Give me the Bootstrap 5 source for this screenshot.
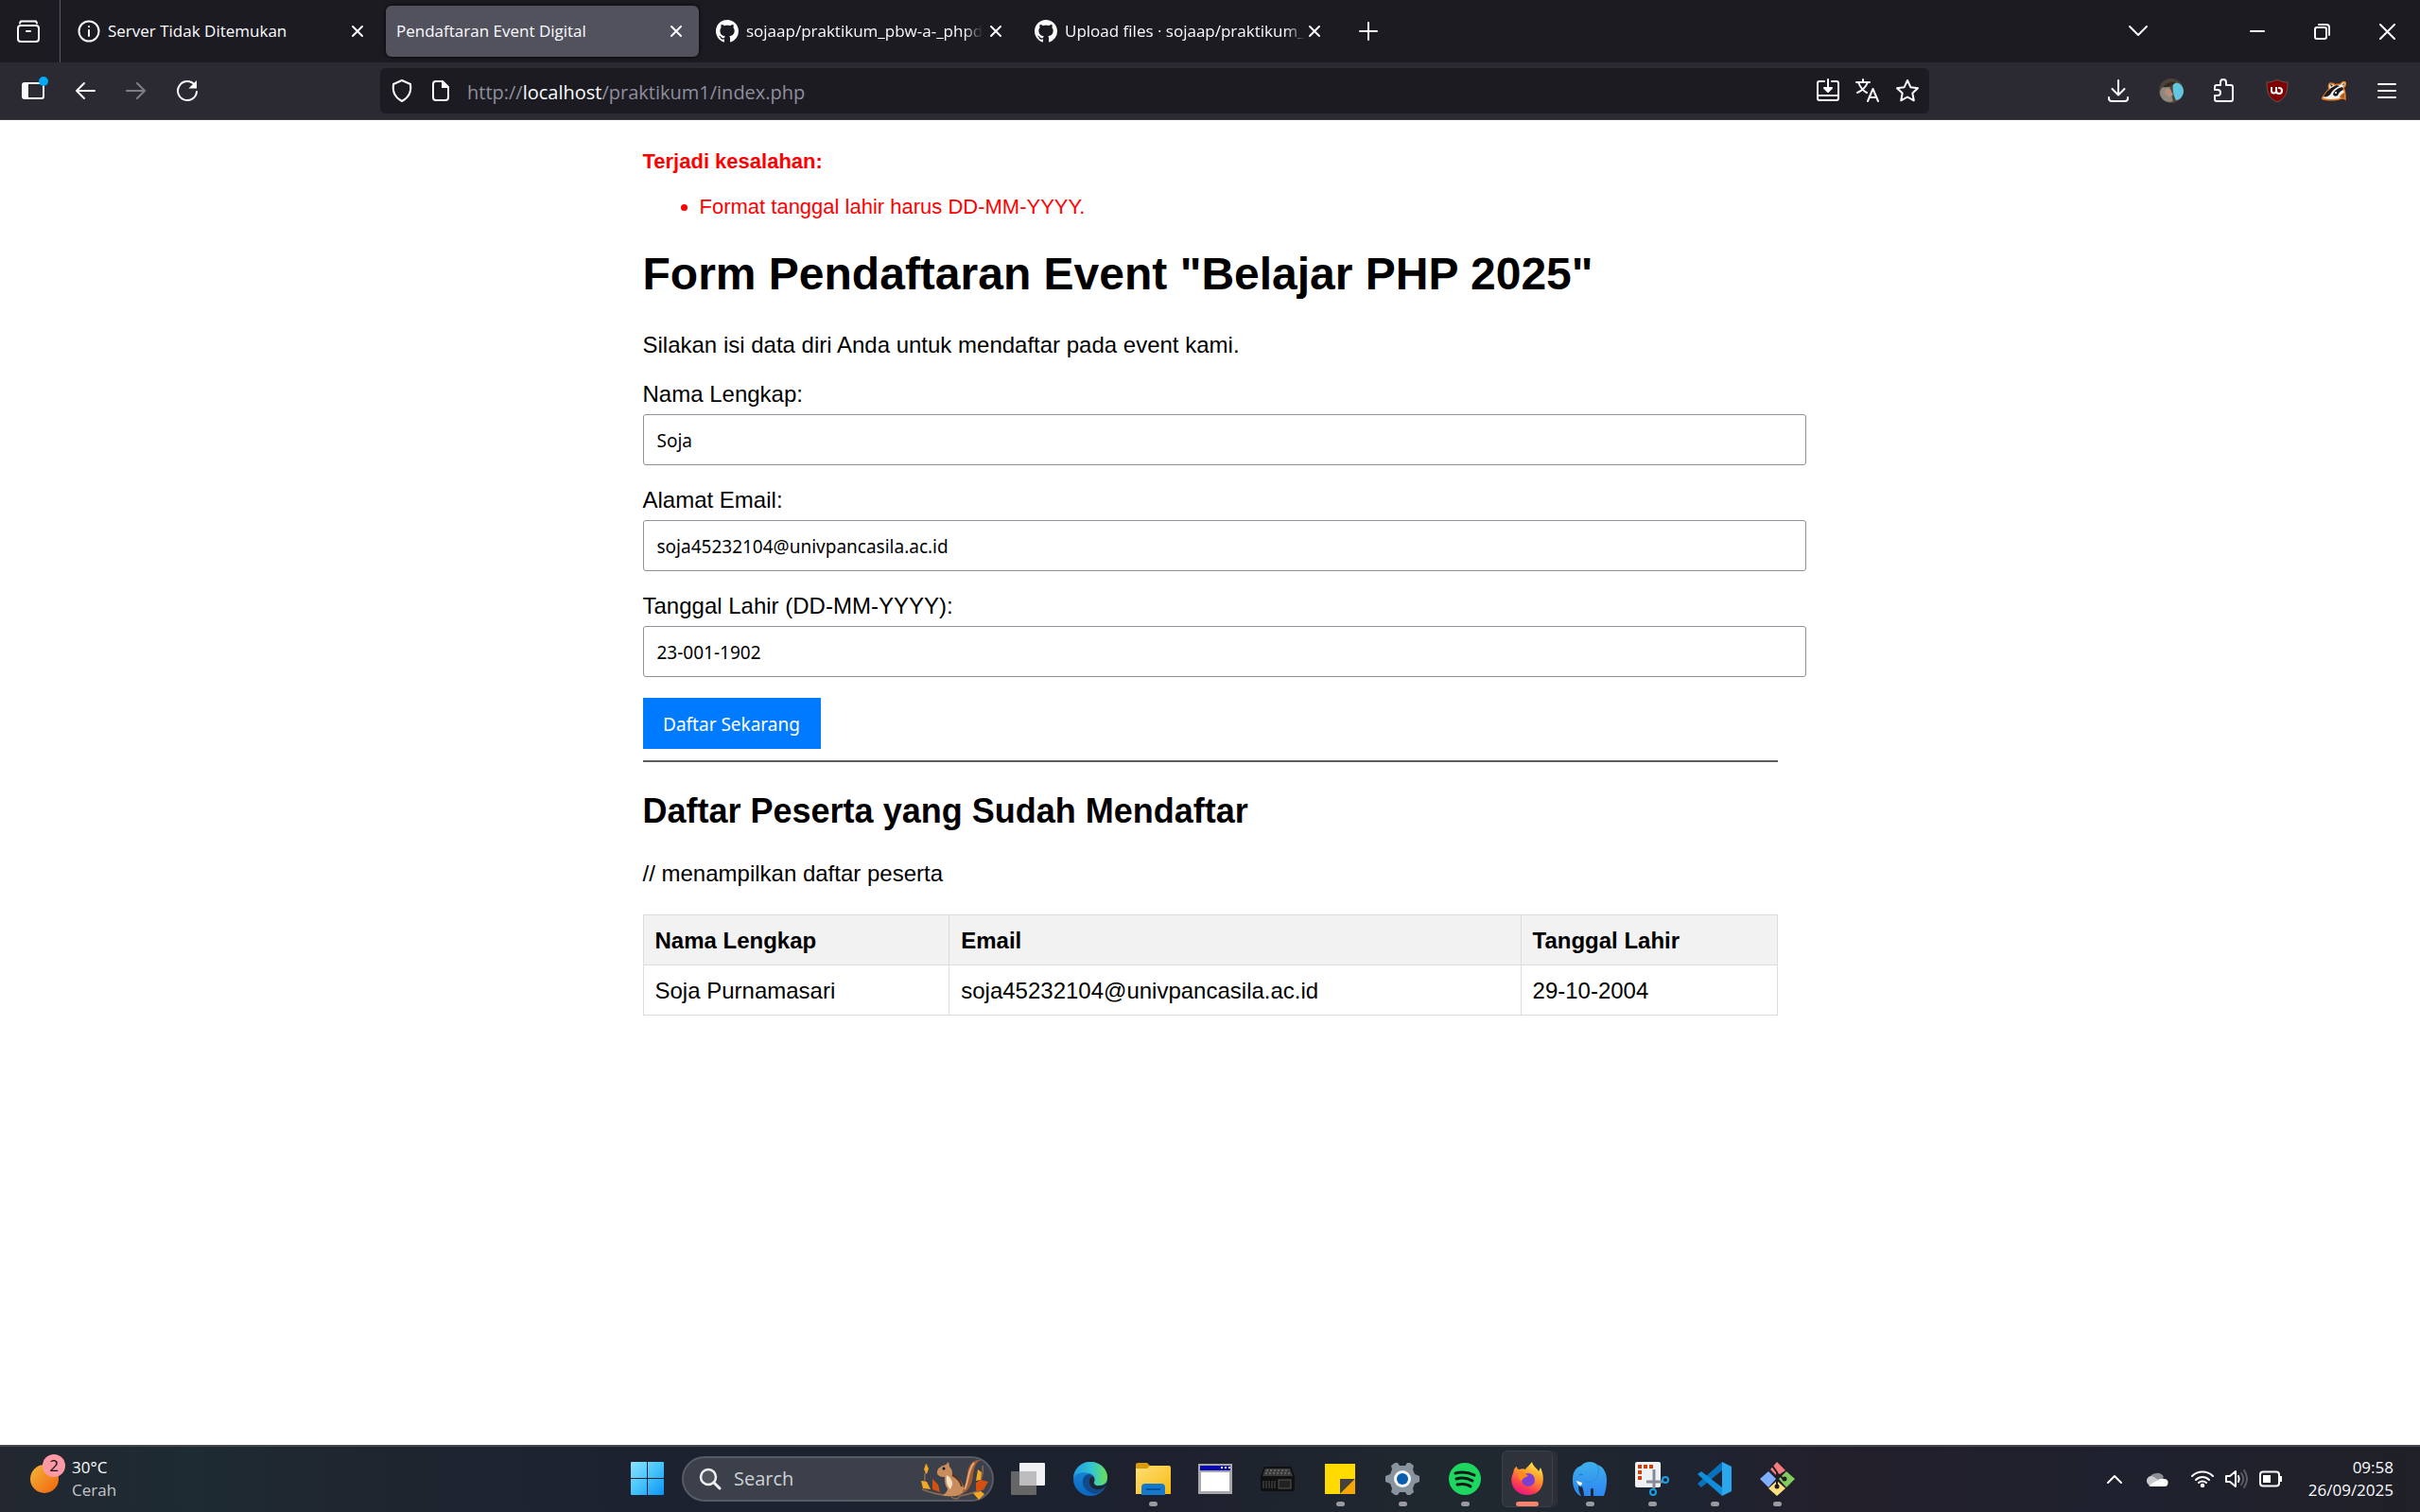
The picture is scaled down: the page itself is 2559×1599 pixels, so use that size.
<!DOCTYPE html>
<html lang="id">
<head>
<meta charset="utf-8">
<meta name="viewport" content="width=device-width, initial-scale=1">
<title>Pendaftaran Event Digital</title>
<link href="https://cdn.jsdelivr.net/npm/bootstrap@5.3.0/dist/css/bootstrap.min.css" rel="stylesheet">
<style>
body{font-family:"Liberation Sans",Arial,sans-serif;font-size:24px;line-height:28px;color:#000;background:#fff}
svg{display:block;flex:none}
.chrome-ui{font-family:"Open Sans","Noto Sans",sans-serif;color:#fbfbfe}
.chrome-ui button,.chrome-ui a{background:none;border:0;padding:0;color:inherit;text-decoration:none}
.ln{fill:none;stroke:currentColor;stroke-width:2;stroke-linecap:round;stroke-linejoin:round}
/* tab strip */
.tabstrip{height:66px;background:#1c1b22}
.recent{width:64px;margin-right:7px}
.chrome-ui .recent{border-right:1px solid #5b5b66;padding-right:4px}
.tab-item{width:331px;height:54px;margin-right:6px;padding:0 17px 0 11px;border-radius:6px;font-size:17px;line-height:24px}
.tab-item.current{background:#52525e;box-shadow:0 0 4px #000}
.tab-item.tight{padding-left:12px;padding-right:16px}
.tab-title{white-space:nowrap}
.tight .tab-title{-webkit-mask-image:linear-gradient(90deg,#000 92%,transparent);mask-image:linear-gradient(90deg,#000 92%,transparent)}
.newtab{width:56px}
.winbtn{width:69px}
/* toolbar */
.toolbar{height:61px;background:#2b2a33;border-bottom:1px solid #3b3a44}
.navside{width:402px;padding-left:9px}
.navbtn{width:54px}
.navbtn.off{opacity:.4}
.urlbox{height:48px;background:#1c1b22;border-radius:6px;padding:0 10px;gap:16px}
.urltext{font-size:20px;line-height:28px}
.chrome-ui .urltext{color:#8f8f9d;padding-top:3px}
.urltext b{font-weight:400;color:#fbfbfe}
.extras{width:519px;padding-right:7px}
.extras button{width:56px}
/* page */
.sheet{width:100%;max-width:1200px;padding-top:30px}
.err{color:#f00;font-size:22px}
.err ul{padding-left:60px;margin:20px 0 29px}
h1{font-size:48px;line-height:56px;font-weight:700;margin:0 0 33px}
h2{font-size:36px;line-height:42px;font-weight:700;margin:31px 0}
.intro{margin-bottom:23px}
.fieldrow{margin-bottom:22px}
.fieldrow label{line-height:30px;margin-bottom:6px;display:block}
.fieldrow input{display:block;width:calc(100% + 30px);height:54px;border:1px solid #8f8f9d;border-radius:3px;padding:1px 14px 0;font:19px "Noto Sans",sans-serif;color:#000;background:#fff}
.send{height:54px;width:188px;background:#007bff;color:#fff;border:0;border-radius:0;padding:1px 0 0;font:19px "Noto Sans",sans-serif;white-space:nowrap}
.rule{height:2px;border:0;background:#5c5c5c;opacity:1;margin:12px 0 0}
.people{width:100%;margin-top:29px;border-collapse:collapse}
.people th,.people td{border:1px solid #ddd;height:53px;padding:1px 12px 0;text-align:left}
.people th{background:#f2f2f2}
/* taskbar */
.taskbar{height:71px;border-top:2px solid #46474c;background:linear-gradient(90deg,#232730 0%,#1d2b33 8%,#20262f 14%,#1c2230 25%,#1d212e 48%,#20282f 60%,#1e2430 70%,#231f2b 76%,#1e212e 88%,#202027 100%);display:grid;grid-template-columns:1fr auto 1fr;font-size:17px;line-height:24px;padding-bottom:2px}
.taskbar .app{width:66px;height:67px;position:relative}
.taskbar .app.open::after{content:"";position:absolute;left:29px;bottom:4px;width:9px;height:5px;border-radius:3px;background:#9a9ba0}
.taskbar .app.live::after{left:21px;width:24px;background:#f4846c}
.livebg{width:54px;height:60px;border-radius:6px;background:#2d323b;border:1px solid #3c4149;box-shadow:5px 0 0 #2a2f38}
.searchpill{width:330px;height:48px;border:2px solid #585b65;border-radius:24px;background:#3b404a;margin:0 3px 0 4px;padding:0 4px 0 16px}
.searchpill input{background:none;border:0;outline:0;width:180px;color:#d0d1d4;font-size:20px;padding:0;margin-left:13px}
.searchpill input::placeholder{color:#d0d1d4;opacity:1}
.weather{padding-left:31px;gap:6px}
.dim{color:#c3c5c9}
.tray{padding-right:28px;gap:12px}
.tray .cloud{margin:0 12px}
.tray .clock{margin-left:16px}
</style>
<script src="https://cdn.jsdelivr.net/npm/bootstrap@5.3.0/dist/js/bootstrap.bundle.min.js"></script>
</head>
<body class="d-flex flex-column min-vh-100">
<svg width="0" height="0" class="position-absolute" aria-hidden="true">
<defs>
<symbol id="x" viewBox="0 0 14 14"><path class="ln" d="M2 2l10 10M12 2L2 12"/></symbol>
<symbol id="gh" viewBox="0 0 16 16"><path fill="#fff" d="M8 0C3.58 0 0 3.58 0 8c0 3.54 2.29 6.53 5.47 7.59.4.07.55-.17.55-.38 0-.19-.01-.82-.01-1.49-2.01.37-2.53-.49-2.69-.94-.09-.23-.48-.94-.82-1.13-.28-.15-.68-.52-.01-.53.63-.01 1.08.58 1.23.82.72 1.21 1.87.87 2.33.66.07-.52.28-.87.51-1.07-1.78-.2-3.64-.89-3.64-3.95 0-.87.31-1.59.82-2.15-.08-.2-.36-1.02.08-2.12 0 0 .67-.21 2.2.82.64-.18 1.32-.27 2-.27s1.36.09 2 .27c1.53-1.04 2.2-.82 2.2-.82.44 1.1.16 1.92.08 2.12.51.56.82 1.27.82 2.15 0 3.07-1.87 3.75-3.65 3.95.29.25.54.73.54 1.48 0 1.07-.01 1.93-.01 2.2 0 .21.15.46.55.38A8.01 8.01 0 0 0 16 8c0-4.42-3.58-8-8-8z"/></symbol>
<linearGradient id="win" x2="1" y2="1"><stop stop-color="#8fe3ff"/><stop offset=".5" stop-color="#45c3fb"/><stop offset="1" stop-color="#0a93f5"/></linearGradient>
<linearGradient id="sun" x2="1" y2="1"><stop stop-color="#f3b83a"/><stop offset="1" stop-color="#f1620c"/></linearGradient>
<linearGradient id="e1" x2="1"><stop stop-color="#1f9be0"/><stop offset=".55" stop-color="#32c6d0"/><stop offset="1" stop-color="#6be04f"/></linearGradient>
<linearGradient id="e2" y2="1" x2="0"><stop stop-color="#1b8edc"/><stop offset="1" stop-color="#0b66c0"/></linearGradient>
<linearGradient id="fo" x2="1" y2="1"><stop stop-color="#ffe07a"/><stop offset="1" stop-color="#f8b90e"/></linearGradient>
<linearGradient id="fx" x1=".8" y1="0" x2=".3" y2="1"><stop stop-color="#fff44f"/><stop offset=".4" stop-color="#ff9a2a"/><stop offset=".75" stop-color="#ff3d4f"/><stop offset="1" stop-color="#e31587"/></linearGradient>
<linearGradient id="el" x2="0" y2="1"><stop stop-color="#3fb0ea"/><stop offset="1" stop-color="#2c86f5"/></linearGradient>
</defs></svg>

<header class="chrome-ui">
 <div class="tabstrip d-flex align-items-center">
  <button class="recent h-100 d-flex align-items-center justify-content-center" aria-label="Tab terakhir"><svg width="26" height="26" viewBox="0 0 26 26" class="ln"><path d="M5 2.500h16M5 2.500l-1 2M21 2.500l1 2"/><rect x="2" y="7" width="22" height="17" rx="3"/><path d="M11 13h4"/></svg></button>
  <div class="tab-item d-flex align-items-center">
   <svg width="24" height="24" viewBox="0 0 24 24" class="ln me-2"><circle cx="12" cy="12" r="10.500"/><path d="M12 11v6M12 7v.2"/></svg>
   <span class="tab-title flex-grow-1">Server Tidak Ditemukan</span><button aria-label="Tutup"><svg width="14" height="14"><use href="#x"/></svg></button></div>
  <div class="tab-item current d-flex align-items-center"><span class="tab-title flex-grow-1">Pendaftaran Event Digital</span><button aria-label="Tutup"><svg width="14" height="14"><use href="#x"/></svg></button></div>
  <div class="tab-item tight d-flex align-items-center"><svg width="24" height="24" class="me-2"><use href="#gh"/></svg><span class="tab-title">sojaap/praktikum_pbw-a-_phpd</span><button class="ms-auto" aria-label="Tutup"><svg width="14" height="14"><use href="#x"/></svg></button></div>
  <div class="tab-item tight d-flex align-items-center"><svg width="24" height="24" class="me-2"><use href="#gh"/></svg><span class="tab-title">Upload files · sojaap/praktikum_</span><button class="ms-auto" aria-label="Tutup"><svg width="14" height="14"><use href="#x"/></svg></button></div>
  <button class="newtab d-flex justify-content-center" aria-label="Tab baru"><svg width="20" height="20" viewBox="0 0 20 20" class="ln"><path d="M10 1v18M1 10h18"/></svg></button>
  <div class="ms-auto d-flex align-items-center">
   <button class="me-5 pe-2" aria-label="Daftar tab"><svg width="22" height="14" viewBox="0 0 22 14" class="ln"><path d="M2 2l9 9 9-9"/></svg></button>
   <button class="winbtn d-flex justify-content-center ms-4" aria-label="Minimalkan"><svg width="16" height="16" viewBox="0 0 16 16" class="ln"><path d="M1 8h14"/></svg></button>
   <button class="winbtn d-flex justify-content-center" aria-label="Pulihkan"><svg width="17" height="17" viewBox="0 0 17 17" class="ln"><rect x="1" y="4" width="12" height="12" rx="2"/><path d="M5 1h8a3 3 0 0 1 3 3v8"/></svg></button>
   <button class="winbtn d-flex justify-content-center" aria-label="Tutup jendela"><svg width="17" height="17" viewBox="0 0 17 17" class="ln"><path d="M1 1l15 15M16 1L1 16"/></svg></button>
  </div>
 </div>
 <div class="toolbar d-flex align-items-center">
  <div class="navside d-flex flex-shrink-0">
   <button class="navbtn d-flex justify-content-center" aria-label="Bilah samping"><svg width="30" height="30" viewBox="0 0 30 30"><rect x="3" y="7" width="22" height="16" rx="2" class="ln"/><path d="M3 7h6v16H3z" fill="#fff"/><circle cx="25" cy="5" r="5" fill="#00a8f5"/></svg></button>
   <button class="navbtn d-flex justify-content-center align-items-center" aria-label="Kembali"><svg width="22" height="20" viewBox="0 0 22 20" class="ln"><path d="M10 2l-8 8 8 8M2 10h19"/></svg></button>
   <button class="navbtn off d-flex justify-content-center align-items-center" aria-label="Maju"><svg width="22" height="20" viewBox="0 0 22 20" class="ln"><path d="M12 2l8 8-8 8M20 10H1"/></svg></button>
   <button class="navbtn d-flex justify-content-center align-items-center" aria-label="Muat ulang"><svg width="24" height="24" viewBox="0 0 24 24"><path class="ln" d="M20 6A10 10 0 1 0 22 13"/><path d="M22 1v8.500h-8.500z" fill="#fff"/></svg></button>
  </div>
  <div class="urlbox flex-grow-1 d-flex align-items-center">
   <svg width="26" height="26" viewBox="0 0 26 26" class="ln"><path d="M13 2l9 4c1 7-1 14-9 18C5 20 3 13 4 6z"/></svg>
   <svg width="24" height="24" viewBox="0 0 24 24"><path class="ln" d="M14 2H7a3 3 0 0 0-3 3v14a3 3 0 0 0 3 3h10a3 3 0 0 0 3-3V8z"/><path d="M13 2v7h7z" fill="#fff"/></svg>
   <a href="#" class="urltext flex-grow-1">http://<b>localhost</b>/praktikum1/index.php</a>
   <svg width="26" height="26" viewBox="0 0 26 26" class="ln"><path d="M9 3H4a2 2 0 0 0-2 2v16a2 2 0 0 0 2 2h18a2 2 0 0 0 2-2V5a2 2 0 0 0-2-2h-5M2 18h22M13 1v12"/><path d="M9 10h8l-4 4z" fill="#fff"/></svg>
   <svg width="26" height="26" viewBox="0 0 26 26" class="ln"><path d="M1 4h14M8 1v3M3 4c2 5 5 9 9 11M13 4c-2 5-6 9-11 11M13 24l5.500-13L24 24M15 20h7"/></svg>
   <svg width="26" height="26" viewBox="0 0 26 26" class="ln"><path d="M13 2l3.300 7.200 7.700 1-5.700 5.300 1.500 7.800L13 19.500l-6.800 3.800 1.500-7.800L2 10.200l7.700-1z"/></svg>
  </div>
  <div class="extras d-flex justify-content-end align-items-center flex-shrink-0">
   <button class="d-flex justify-content-center" aria-label="Unduhan"><svg width="24" height="24" viewBox="0 0 24 24" class="ln"><path d="M12 1v15M5.500 10l6.500 6.500 6.500-6.500M2 19v1a3 3 0 0 0 3 3h14a3 3 0 0 0 3-3v-1"/></svg></button>
   <button class="d-flex justify-content-center" aria-label="Profil"><svg width="26" height="26" viewBox="0 0 26 26"><circle cx="13" cy="13" r="13" fill="#4d4438"/><path d="M15 5c7-2 11 4 11 9-1 7-6 9-8 9-3-5-4-12-3-18z" fill="#62c6de"/><path d="M1 16c0-6 4-9 10-7 3 4 2 10 4 15C8 27 2 22 1 16z" fill="#8d897c"/><path d="M4 9c4-5 9-6 14-5-4 4-9 6-14 5z" fill="#352620"/><path d="M7 11l5 1 3 5-4 3-5-4z" fill="#b78e7b"/></svg></button>
   <button class="d-flex justify-content-center" aria-label="Ekstensi"><svg width="26" height="26" viewBox="0 0 26 26" class="ln"><path d="M3 12V9a2 2 0 0 1 2-2h4V4a3 3 0 0 1 6 0v3h5a2 2 0 0 1 2 2v13a2 2 0 0 1-2 2H5a2 2 0 0 1-2-2v-4h3a3 3 0 0 0 0-6z"/></svg></button>
   <button class="d-flex justify-content-center" aria-label="uBlock"><svg width="26" height="26" viewBox="0 0 26 26"><path d="M13 1c3 2 7 3 11 3 0 11-2 17-11 21C4 21 2 15 2 4c4 0 8-1 11-3z" fill="#800000" stroke="#666" stroke-width=".8"/><path d="M7 9v4a2.500 2.500 0 0 0 5 0V9v4a3 3 0 1 0 3-3h-1" fill="none" stroke="#fff" stroke-width="2"/></svg></button>
   <button class="d-flex justify-content-center ms-1" aria-label="Privacy Badger"><svg width="26" height="22" viewBox="0 0 26 22"><path d="M1 18c2-3 4-6 7-9-1-3-1-5 1-6 2 0 4 0 5 2 2-1 4-1 6-1 1-2 3-3 5-2 1 2 0 4-2 6 2 3 2 7 2 12-3-2-5-1-7 0-5 1-11 1-15 0-2 0-3-1-2-2z" fill="#f2f2f2" stroke="#e67a1b" stroke-width="1.500"/><path d="M2 17c3-5 8-10 14-12l3 1c-5 2-8 5-10 9-2 2-5 3-7 2z" fill="#1a1a1a"/><path d="M12 15c1-4 5-7 10-8l1 3c-3 1-5 3-6 6-2 1-4 1-5-1z" fill="#1a1a1a"/><path d="M9 4l3 1-2 2zM22 4l2-1-1 3z" fill="#222"/><path d="M19 18c1-3 3-4 5-5v6z" fill="#b85f16"/><circle cx="15" cy="13" r="1" fill="#fff"/></svg></button>
   <button class="d-flex justify-content-center" aria-label="Menu"><svg width="22" height="18" viewBox="0 0 22 18" class="ln"><path d="M2 2h18M2 9h18M2 16h18"/></svg></button>
  </div>
 </div>
</header>

<main class="flex-grow-1">
 <div class="sheet mx-auto">
  <div class="err"><strong>Terjadi kesalahan:</strong><ul><li>Format tanggal lahir harus DD-MM-YYYY.</li></ul></div>
  <h1>Form Pendaftaran Event "Belajar PHP 2025"</h1>
  <p class="intro">Silakan isi data diri Anda untuk mendaftar pada event kami.</p>
  <form>
   <div class="fieldrow"><label for="nama">Nama Lengkap:</label><input id="nama" type="text" value="Soja"></div>
   <div class="fieldrow"><label for="email">Alamat Email:</label><input id="email" type="text" value="soja45232104@univpancasila.ac.id"></div>
   <div class="fieldrow"><label for="lahir">Tanggal Lahir (DD-MM-YYYY):</label><input id="lahir" type="text" value="23-001-1902"></div>
   <button type="button" class="send d-block">Daftar Sekarang</button>
  </form>
  <hr class="rule">
  <h2>Daftar Peserta yang Sudah Mendaftar</h2>
  <p class="m-0">// menampilkan daftar peserta</p>
  <table class="people">
   <colgroup><col style="width:27%"><col><col style="width:22.6%"></colgroup>
   <thead><tr><th>Nama Lengkap</th><th>Email</th><th>Tanggal Lahir</th></tr></thead>
   <tbody><tr><td>Soja Purnamasari</td><td>soja45232104@univpancasila.ac.id</td><td>29-10-2004</td></tr></tbody>
  </table>
 </div>
</main>

<footer class="taskbar chrome-ui">
 <div class="weather d-flex align-items-center">
  <svg width="39" height="52" viewBox="0 0 39 52"><circle cx="16" cy="26" r="15" fill="url(#sun)"/><circle cx="26" cy="12" r="12" fill="#ff99a4"/><text x="26" y="18" text-anchor="middle" font-size="17" fill="#111">2</text></svg>
  <div><div>30°C</div><div class="dim">Cerah</div></div>
 </div>
 <div class="d-flex align-items-center ps-1">
  <button class="app d-flex align-items-center justify-content-center" aria-label="Mulai"><svg width="35" height="35" viewBox="0 0 35 35"><path fill="url(#win)" d="M0 1a1 1 0 0 1 1-1h16v17H0zM18 0h16a1 1 0 0 1 1 1v16H18zM0 18h17v17H1a1 1 0 0 1-1-1zM18 18h17v16a1 1 0 0 1-1 1H18z"/></svg></button>
  <div class="searchpill d-flex align-items-center">
   <svg width="24" height="24" viewBox="0 0 24 24"><circle cx="10" cy="10" r="8" fill="#50545d" stroke="#f0f0f2" stroke-width="2.500"/><path d="M16 16l6 6" stroke="#f0f0f2" stroke-width="3" stroke-linecap="round"/></svg>
   <input type="search" placeholder="Search" aria-label="Search">
   <svg class="ms-auto" width="72" height="44" viewBox="0 0 72 44"><path d="M2 33c12 5 20 6 30 7 4 4 8 4 10 0 10-2 18-4 26-8M7 6c-1 8-3 12-2 20M66 8c1 8 0 14-6 22" fill="none" stroke="#8b6b4f" stroke-width="1.500"/><path d="M43 38c5-6 5-14 7-22 1-9 6-15 14-14-6 3-7 9-8 16-1 10-5 18-13 20z" fill="#a45b30"/><path d="M47 33c5-10 3-20 10-28" stroke="#e1a87a" stroke-width="2" fill="none"/><path d="M24 40c2-3 5-4 5-8-3-3-3-8-3-12-5 0-9-2-8-6 1-4 5-6 9-7l3-3 1 5c3 3 3 6 3 9 8 3 12 9 12 14 0 6-5 9-12 8z" fill="#c98c5c"/><path d="M28 18c-1 6 0 11 4 15l2-5c0-5-2-8-6-10z" fill="#f6dfc3"/><path d="M34 18c6 3 9 7 10 12" stroke="#5b3018" stroke-width="2" fill="none"/><circle cx="25" cy="11" r="1.500" fill="#111"/><path d="M6 6l3 5-2 6-3-5zM1 24l6 1 4 8-8-1zM61 12l4 3-1 8-5 1zM56 37l8-2 4 3-6 6z" fill="#f7a823"/><path d="M13 22l6 6 2 8-8-3zM59 26l5-3 8 2-5 8-8 2z" fill="#d84f12"/></svg>
  </div>
  <button class="app d-flex align-items-center justify-content-center" aria-label="Tampilan tugas"><svg width="36" height="34" viewBox="0 0 36 34"><rect x="9" width="27" height="24" rx="1" fill="#f1f1f3"/><rect y="9" width="27" height="25" rx="1" fill="#666"/><path d="M9 9h18v15H9z" fill="#bdbdbf"/></svg></button>
  <button class="app d-flex align-items-center justify-content-center" aria-label="Edge"><svg width="36" height="36" viewBox="0 0 36 36"><circle cx="18" cy="18" r="18" fill="url(#e2)"/><path d="M0 17C1 6 9 0 18 0c11 0 18 8 18 16 0 6-4 9-9 9-4 0-6-2-5-4 2-3 0-8-5-9C10 10 2 12 0 17z" fill="url(#e1)"/><path d="M12 15c-5 6-1 15 7 18 5 2 10 0 13-5-7 3-14 0-15-5-1-4 1-7 3-8-2-3-6-2-8 0z" fill="#114a8b"/><path d="M22 21c-1 3 2 5 6 4 4 0 7-2 8-5l-1 5-3 3c-7 3-14 0-15-5-1-4 1-7 3-8 2 1 3 4 2 6z" fill="#1d2432"/></svg></button>
  <button class="app open d-flex align-items-center justify-content-center" aria-label="File Explorer"><svg width="37" height="34" viewBox="0 0 37 34"><path d="M0 2a2 2 0 0 1 2-2h10l4 4-3 5H0z" fill="#dc9a06"/><path d="M0 6h12l3-3h20a2 2 0 0 1 2 2v28H0z" fill="url(#fo)"/><path d="M6 34V26a4 4 0 0 1 4-4h17a4 4 0 0 1 4 4v8z" fill="#1479cc"/><path d="M11 28h15" stroke="#07509c" stroke-width="2"/></svg></button>
  <button class="app d-flex align-items-center justify-content-center" aria-label="Aplikasi"><svg width="36" height="32" viewBox="0 0 36 32"><path d="M0 0h36v32H0z" fill="#a8a8ab"/><path d="M2 2h32v5H2z" fill="#0707b2"/><path d="M24 3h2v2h-2zM28 3h2v2h-2zM32 3h2v2h-2z" fill="#fff"/><path d="M3 9h30v20H3z" fill="#fff"/></svg></button>
  <button class="app d-flex align-items-center justify-content-center" aria-label="Server"><svg width="36" height="26" viewBox="0 0 36 26"><path d="M4 0h28l4 10v14a2 2 0 0 1-2 2H2a2 2 0 0 1-2-2V10z" fill="#101010"/><path d="M5 2h26l3 8H2z" fill="#3c3c3c"/><path d="M6 4h24M5 7h26" stroke="#888" stroke-dasharray="2 2"/><path d="M3 15v8M6 15v8M9 15v8M12 15v8M15 15v8" stroke="#555"/><rect x="19" y="14" width="13" height="9" fill="#222" stroke="#555"/></svg></button>
  <button class="app open d-flex align-items-center justify-content-center" aria-label="Catatan"><svg width="32" height="32" viewBox="0 0 32 32"><path d="M0 0h32v32H0z" fill="#ffda00"/><path d="M16 16h16L16 32z" fill="#44413f"/><path d="M32 16v16H16z" fill="#f6a800"/></svg></button>
  <button class="app open d-flex align-items-center justify-content-center" aria-label="Setelan"><svg width="36" height="36" viewBox="0 0 36 36"><path d="M10 1h3l2 3h6l2-3h3l4 3-1 4 2 5 5 2v6l-5 2-2 5 1 4-4 3h-3l-2-3h-6l-2 3h-3l-4-3 1-4-2-5-5-2v-6l5-2 2-5-1-4z" fill="#88939d"/><circle cx="18" cy="18" r="9" fill="#f5f7f9"/><circle cx="18" cy="18" r="6" fill="#0a5cad"/></svg></button>
  <button class="app open d-flex align-items-center justify-content-center" aria-label="Spotify"><svg width="34" height="34" viewBox="0 0 34 34"><circle cx="17" cy="17" r="17" fill="#1ed760"/><path d="M7 11c7-2 14-1 20 2M8 17c6-2 12-1 17 2M9 23c5-1 10-1 14 2" fill="none" stroke="#101b18" stroke-width="3" stroke-linecap="round"/></svg></button>
  <button class="app open live d-flex align-items-center justify-content-center" aria-label="Firefox"><span class="livebg d-flex align-items-center justify-content-center"><svg width="35" height="35" viewBox="0 0 35 35"><path d="M3 8c1-2 2-3 3-3 0 2 1 3 3 3 2-1 4-1 6 0 1-2 5-5 7-8 1 5 5 6 7 10l2-4c6 12 3 29-13 29C3 35-3 22 2 12z" fill="url(#fx)"/><circle cx="18" cy="19" r="7" fill="#7d3fd3"/><path d="M9 11c4 0 7 2 9 4-2 1-5 1-7 5-3-3-5-6-2-9z" fill="#ff8a1c"/></svg></span></button>
  <button class="app open d-flex align-items-center justify-content-center" aria-label="Gajah"><svg width="36" height="36" viewBox="0 0 36 36"><path d="M9 4C13-1 22-1 26 3c7 2 10 9 10 16 0 6-1 11-3 17H22v-6c0-3-3-3-3 0v6h-7c0-4-1-7-2-10-2 1-3 0-4-1 0 4 1 8 3 11H8C2 32 0 26 0 18 0 11 3 6 9 4z" fill="url(#el)"/><path d="M4 20l6 2c0 2-1 3-2 3-2-1-3-2-4-5z" fill="#fff"/><path d="M26 3c3 6 1 14-4 17-4 2-7 2-10 0" fill="none" stroke="#2b8fdc"/><path d="M7 14c2-1 3-1 4 0" fill="none" stroke="#1c74bd"/></svg></button>
  <button class="app open d-flex align-items-center justify-content-center" aria-label="Snipping Tool"><svg width="36" height="36" viewBox="0 0 36 36"><rect width="27" height="27" rx="2" fill="#eef2f6"/><path d="M3 5h16M5 9v12" fill="none" stroke="#d83b01" stroke-width="4" stroke-dasharray="4 2"/><path d="M20 8v20M12 21h17" stroke="#858c93" stroke-width="3"/><circle cx="32" cy="19" r="3" fill="none" stroke="#19a0e8" stroke-width="2"/><circle cx="19" cy="32" r="3" fill="none" stroke="#19a0e8" stroke-width="2"/></svg></button>
  <button class="app open d-flex align-items-center justify-content-center" aria-label="Visual Studio Code"><svg width="36" height="36" viewBox="0 0 36 36"><path d="M26 0v9L4 27l-4-4z" fill="#0872bd"/><path d="M0 13l4-3 22 17v9z" fill="#128ddb"/><path d="M26 0l10 5v26l-10 5z" fill="#29a8ee"/></svg></button>
  <button class="app open d-flex align-items-center justify-content-center" aria-label="Git"><svg width="37" height="36" viewBox="0 0 37 36"><path d="M18 0l9 9-9 6-7-7z" fill="#f47c7c"/><path d="M9 10l8 8-8 9-9-9z" fill="#7fb0ff"/><path d="M28 10l9 8-9 9-8-9z" fill="#84cd5d"/><path d="M18 20l9 8-9 8-9-8z" fill="#ffe07e"/><path d="M13 4l5 7v15M18 12l8 7" fill="none" stroke="#241c20" stroke-width="2"/><circle cx="18" cy="26" r="2.500" fill="#241c20"/><circle cx="26" cy="18" r="2.500" fill="#241c20"/></svg></button>
 </div>
 <div class="tray d-flex align-items-center justify-content-end">
  <button aria-label="Ikon tersembunyi"><svg width="18" height="12" viewBox="0 0 18 12" class="ln"><path d="M2 10l7-7 7 7"/></svg></button>
  <svg width="24" height="18" viewBox="0 0 24 18" class="cloud"><path d="M4 8a8 7 0 0 1 15-1l-7 5z" fill="#8c8e94"/><path d="M5 16a5 5 0 1 1 2-10l8 5z" fill="#c9cacd"/><path d="M3 16l12-7a8 8 0 0 1 5 0 4 4 0 0 1-1 8H5z" fill="#fff"/></svg>
  <svg width="24" height="18" viewBox="0 0 24 18" class="ln"><path d="M1 6c6-6 16-6 22 0M5 10c4-4 10-4 14 0M8 13c2-2 6-2 8 0"/><circle cx="12" cy="16" r="1.200" fill="#fff"/></svg>
  <svg width="24" height="20" viewBox="0 0 24 20" class="ln"><path d="M1 7h4l6-5v16l-6-5H1zM14 7c1 2 1 4 0 6"/><path d="M17 4c3 4 3 8 0 12M20 1c4 6 4 12 0 18" stroke="#5b5d66"/></svg>
  <svg width="24" height="18" viewBox="0 0 24 18"><rect x="1" y="1.500" width="20" height="15" rx="3" class="ln"/><path d="M4 5h8v8H4zM22 6h2v6h-2z" fill="#fff"/></svg>
  <div class="clock text-end"><div>09:58</div><div>26/09/2025</div></div>
 </div>
</footer>
</body>
</html>
